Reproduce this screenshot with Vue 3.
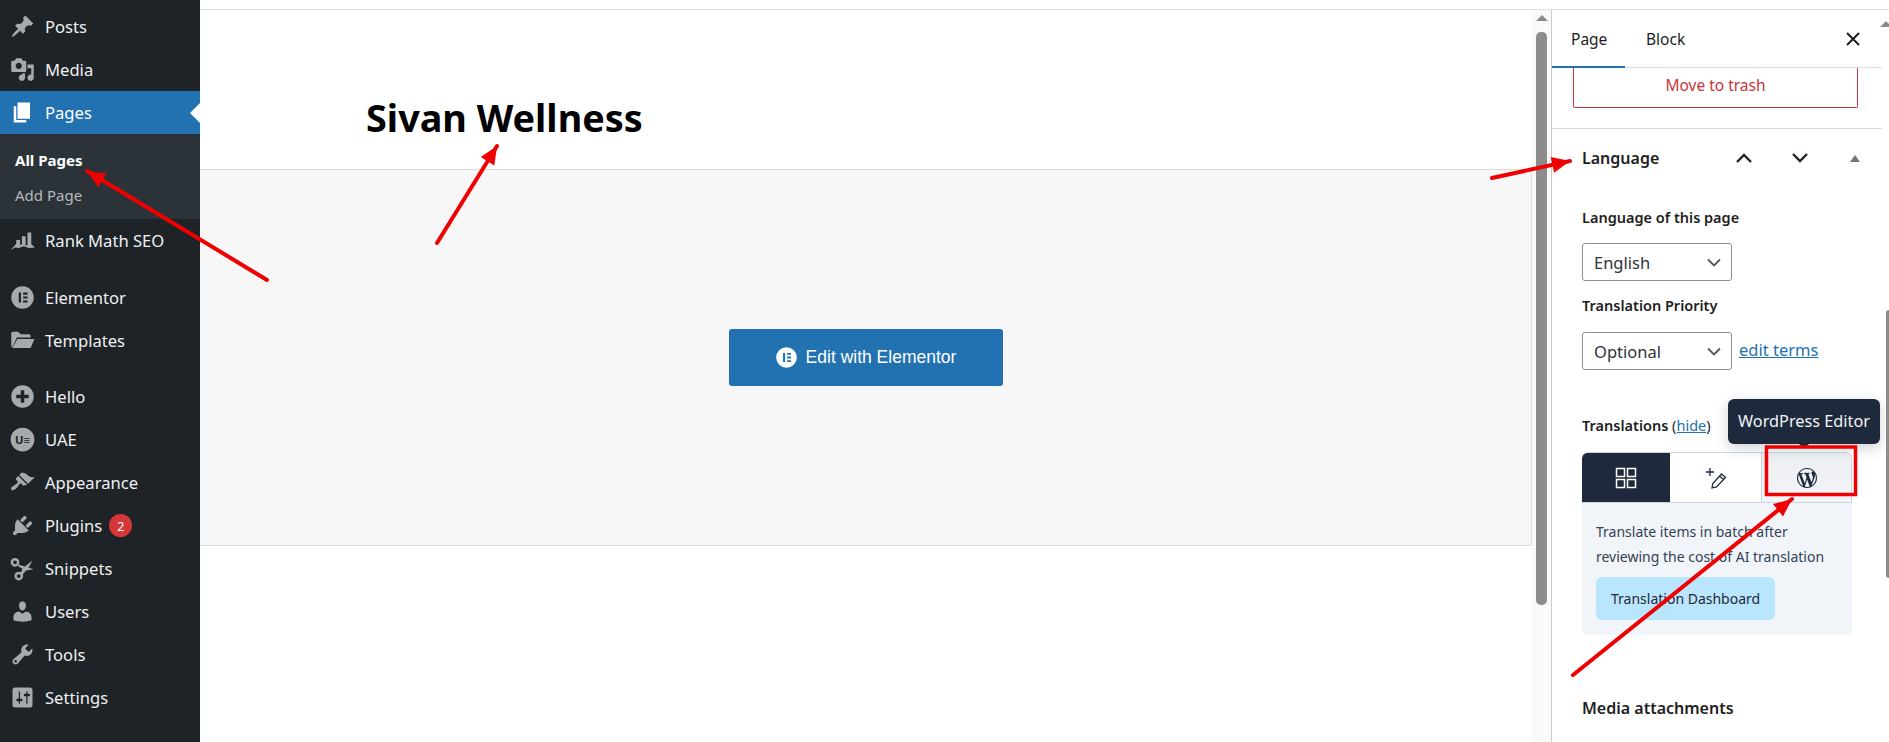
<script setup>
const ICONS = {
  posts: 'M10.44 3.02l1.82-1.82 6.36 6.35-1.83 1.82c-1.05-.68-2.48-.57-3.41.36l-.75.75c-.92.93-1.04 2.35-.35 3.41l-1.83 1.82-2.41-2.41-2.8 2.79c-.42.42-3.38 2.71-3.8 2.29s1.86-3.39 2.28-3.81l2.79-2.79L4.1 9.36l1.83-1.82c1.05.69 2.48.57 3.4-.36l.75-.75c.93-.92 1.05-2.35.36-3.41z',
  media: 'M13 11V4c0-.55-.45-1-1-1h-1.67L9 1H5L3.67 3H2c-.55 0-1 .45-1 1v7c0 .55.45 1 1 1h10c.55 0 1-.45 1-1zM7 4.5c1.38 0 2.5 1.12 2.5 2.5S8.38 9.5 7 9.5 4.5 8.38 4.5 7 5.62 4.5 7 4.5zM14 6h5v10.5c0 1.38-1.12 2.5-2.5 2.5S14 17.88 14 16.5s1.12-2.5 2.5-2.5c.17 0 .34.02.5.05V9h-3V6zm-4 8.05V13h2v3.5c0 1.38-1.12 2.5-2.5 2.5S7 17.88 7 16.5 8.12 14 9.5 14c.17 0 .34.02.5.05z',
  pages: 'M6 15V2h10v13H6zm-1 1h8v2H3V5h2v11z',
  rank: 'M.5 17.500L5 12.500V9.500h3v3.500l1.500.5V6.500h3v7.500l1.500-.5V3.500h3V13l3 2.500-5 .5-4-1.500-4 1.500-3-.5z',
  elementor: 'M10 1a9 9 0 1 0 0 18 9 9 0 0 0 0-18zM7 6h1.800v8H7zm3.500 0H14v1.700h-3.500zm0 3.150H14v1.700h-3.500zm0 3.150H14V14h-3.500z',
  templates: 'M1 4.500C1 3.700 1.500 3 2.300 3h4.200l2 2h6.700c.7 0 1.300.6 1.300 1.300V7.500H5.500L2.300 14.500 1 15zM5.900 8.800H19.500l-3 7.200H1.800z',
  hello: 'M10 1a9 9 0 1 0 0 18 9 9 0 0 0 0-18zM8.600 5h2.800v3.600H15v2.800h-3.600V15H8.600v-3.600H5V8.600h3.600z',
  appearance: 'M14.480 11.060L7.410 3.990l1.500-1.500c.5-.56 2.300-.47 3.510.32 1.210.8 1.430 1.280 2.910 2.100 1.180.64 2.450 1.260 4.450.85zm-.71.71L6.700 4.700 4.930 6.470c-.39.39-.39 1.020 0 1.410l1.060 1.060c.39.39.39 1.030 0 1.420-.6.6-1.430 1.110-2.210 1.690-.35.26-.7.53-1.010.84C1.430 13.230.4 14.950 1.260 15.900c.95.85 2.670-.17 4.020-1.510.3-.31.57-.66.84-1.020.58-.78 1.090-1.610 1.690-2.210.39-.39 1.020-.39 1.410 0l1.060 1.060c.39.39 1.020.39 1.410 0z',
  plugins: 'M13.110 4.360L9.870 7.600 8 5.730l3.240-3.240c.35-.34 1.050-.2 1.560.32.52.51.66 1.210.31 1.550zm-8 1.770l.91-1.120 9.010 9.010-1.190.84c-.71.71-2.630 1.160-3.820 1.160H6.140L4.900 17.260c-.59.59-1.540.59-2.120 0-.59-.58-.59-1.530 0-2.120l1.240-1.240v-3.880c0-1.130.4-3.190 1.090-3.890zm7.260 3.970l3.240-3.240c.34-.35 1.040-.21 1.550.31.52.51.66 1.210.31 1.550l-3.240 3.250z',
  users: 'M10 9.250c-2.270 0-2.730-3.440-2.730-3.440C7 4.020 7.820 2 9.970 2c2.160 0 2.980 2.020 2.710 3.810 0 0-.41 3.440-2.680 3.440zm0 2.570L12.720 10c2.390 0 4.520 2.330 4.520 4.530v2.490s-3.650 1.130-7.240 1.130c-3.650 0-7.240-1.130-7.240-1.130v-2.490c0-2.250 1.940-4.480 4.470-4.480z',
  tools: 'M16.680 9.770c-1.340 1.340-3.300 1.670-4.950.99l-5.410 6.520c-.99.99-2.590.99-3.580 0s-.99-2.590 0-3.570l6.520-5.420c-.68-1.650-.35-3.610.99-4.950 1.280-1.280 3.120-1.620 4.720-1.060l-2.890 2.890 2.820 2.820 2.860-2.870c.53 1.580.18 3.390-1.080 4.650zM3.810 16.210c.4.39 1.040.39 1.430 0 .4-.4.4-1.040 0-1.430-.39-.4-1.030-.4-1.430 0-.39.39-.39 1.030 0 1.430z',
  settings: 'M18 16V4c0-1.100-.9-2-2-2H4c-1.100 0-2 .9-2 2v12c0 1.100.9 2 2 2h12c1.100 0 2-.9 2-2zM8 11h1c.55 0 1 .45 1 1s-.45 1-1 1H8v1.500c0 .28-.22.5-.5.5s-.5-.22-.5-.5V13H6c-.55 0-1-.45-1-1s.45-1 1-1h1V5.500c0-.28.22-.5.5-.5s.5.22.5.5V11zm5-2h-1c-.55 0-1-.45-1-1s.45-1 1-1h1V5.500c0-.28.22-.5.5-.5s.5.22.5.5V7h1c.55 0 1 .45 1 1s-.45 1-1 1h-1v5.500c0 .28-.22.5-.5.5s-.5-.22-.5-.5V9z',
  circle: 'M10 1a9 9 0 1 0 0 18 9 9 0 0 0 0-18z'
}

const WP_LOGO = 'M20 10c0-5.510-4.490-10-10-10C4.480 0 0 4.490 0 10c0 5.520 4.480 10 10 10 5.510 0 10-4.480 10-10zM7.780 15.370L4.370 6.220c.55-.02 1.170-.08 1.170-.08.5-.06.44-1.130-.06-1.110 0 0-1.450.11-2.370.11-.18 0-.37 0-.58-.01C4.120 2.690 6.870 1.110 10 1.110c2.330 0 4.450.87 6.050 2.340-.68-.11-1.650.39-1.650 1.580 0 .74.45 1.360.9 2.100.35.61.55 1.360.55 2.460 0 1.490-1.400 5-1.400 5l-3.030-8.370c.54-.02.82-.17.82-.17.5-.05.44-1.250-.06-1.220 0 0-1.440.12-2.380.12-.87 0-2.330-.12-2.330-.12-.5-.03-.56 1.200-.06 1.220l.92.08 1.260 3.410zM17.410 10c.24-.64.74-1.870.43-4.250.7 1.290 1.050 2.710 1.050 4.250 0 3.290-1.730 6.240-4.400 7.780.97-2.590 1.940-5.200 2.920-7.780zM6.100 18.090C3.120 16.630 1.110 13.530 1.110 10c0-1.300.23-2.480.72-3.590C3.250 10.300 4.670 14.200 6.100 18.090zm4.030-6.630l2.580 6.980c-.83.29-1.730.45-2.640.45-.77 0-1.510-.11-2.210-.32.77-2.370 1.530-4.730 2.270-7.110z'

const groups = [
  [
    { label: 'Posts', icon: 'posts' },
    { label: 'Media', icon: 'media' },
    { label: 'Pages', icon: 'pages', active: true, sub: ['All Pages', 'Add Page'] },
    { label: 'Rank Math SEO', icon: 'rank' }
  ],
  [
    { label: 'Elementor', icon: 'elementor' },
    { label: 'Templates', icon: 'templates' }
  ],
  [
    { label: 'Hello', icon: 'hello' },
    { label: 'UAE', icon: 'uae' },
    { label: 'Appearance', icon: 'appearance' },
    { label: 'Plugins', icon: 'plugins', badge: 2 },
    { label: 'Snippets', icon: 'snippets' },
    { label: 'Users', icon: 'users' },
    { label: 'Tools', icon: 'tools' },
    { label: 'Settings', icon: 'settings' }
  ],
  [{ label: '', icon: 'circle' }]
]

const arrows = [
  { from: [267, 280], to: [87, 171] },
  { from: [437, 243], to: [497, 146] },
  { from: [1492, 178], to: [1570, 161] },
  { from: [1573, 675], to: [1792, 499] }
]

function head(a) {
  const [x1, y1] = a.from
  const [x2, y2] = a.to
  const len = Math.hypot(x2 - x1, y2 - y1)
  const ux = (x2 - x1) / len
  const uy = (y2 - y1) / len
  const bx = x2 - ux * 18
  const by = y2 - uy * 18
  return `${x2},${y2} ${bx - uy * 8},${by + ux * 8} ${bx + uy * 8},${by - ux * 8}`
}
</script>

<template>
  <div class="page">
    <aside class="adminmenu">
      <div v-for="(group, g) in groups" :key="g" class="menu-group">
        <template v-for="item in group" :key="item.icon">
          <div class="menu-item" :class="{ active: item.active }">
            <span class="menu-icon">
              <svg v-if="item.icon === 'snippets'" viewBox="0 0 20 20" width="25" height="25">
                <circle cx="4" cy="5" r="2.500" fill="none" stroke="currentColor" stroke-width="2" />
                <circle cx="7" cy="16" r="2.500" fill="none" stroke="currentColor" stroke-width="2" />
                <path d="M6 6.500l13 4-6 1-6-3zM8.500 14L10 10l8-6.500-3 5.500-5 6z" fill="currentColor" />
              </svg>
              <svg v-else-if="item.icon === 'uae'" viewBox="0 0 20 20" width="25" height="25">
                <circle cx="10" cy="10" r="9.500" fill="currentColor" />
                <text x="10" y="13.500" text-anchor="middle" class="uae-mark">U≡</text>
              </svg>
              <svg v-else viewBox="0 0 20 20" width="25" height="25">
                <path :d="ICONS[item.icon]" fill="currentColor" fill-rule="evenodd" />
              </svg>
            </span>
            <span class="menu-label">{{ item.label }}</span>
            <span v-if="item.badge" class="menu-badge">{{ item.badge }}</span>
          </div>
          <div v-if="item.sub" class="submenu">
            <div v-for="(s, i) in item.sub" :key="s" class="submenu-item" :class="{ current: i === 0 }">{{ s }}</div>
          </div>
        </template>
      </div>
    </aside>

    <div class="workspace">
      <main class="editor">
        <div class="canvas">
          <div class="title-block">
            <h1>Sivan Wellness</h1>
          </div>
          <div class="builder-block">
            <button class="elementor-btn">
              <svg viewBox="0 0 20 20" width="23" height="23">
                <path :d="ICONS.elementor" fill="#fff" fill-rule="evenodd" />
              </svg>
              Edit with Elementor
            </button>
          </div>
        </div>
        <div class="scrollbar">
          <span class="scroll-up"></span>
          <span class="scroll-thumb"></span>
        </div>
      </main>

      <section class="sidepanel">
        <div class="tabs">
          <div class="tab selected">Page</div>
          <div class="tab">Block</div>
          <svg class="close" viewBox="0 0 24 24" width="24" height="24">
            <path d="M6 6l12 12M18 6L6 18" stroke="#1e1e1e" stroke-width="2" fill="none" />
          </svg>
        </div>

        <div class="trash-wrap">
          <div class="trash">Move to trash</div>
        </div>

        <div class="lang-panel">
          <div class="lang-head">
            <h2>Language</h2>
            <div class="lang-controls">
              <svg viewBox="0 0 20 12" width="20" height="12"><path d="M3 10l7-7 7 7" fill="none" stroke="#1d2327" stroke-width="2.400" /></svg>
              <svg viewBox="0 0 20 12" width="20" height="12"><path d="M3 2l7 7 7-7" fill="none" stroke="#1d2327" stroke-width="2.400" /></svg>
              <span class="collapse"></span>
            </div>
          </div>

          <div class="field-label first">Language of this page</div>
          <div class="select">
            <span>English</span>
            <svg viewBox="0 0 14 9" width="14" height="9"><path d="M1 1.500l6 6 6-6" fill="none" stroke="#50575e" stroke-width="1.800" /></svg>
          </div>

          <div class="field-label second">Translation Priority</div>
          <div class="select-row">
            <div class="select">
              <span>Optional</span>
              <svg viewBox="0 0 14 9" width="14" height="9"><path d="M1 1.500l6 6 6-6" fill="none" stroke="#50575e" stroke-width="1.800" /></svg>
            </div>
            <a class="link terms">edit terms</a>
          </div>

          <div class="translations-label">
            <b>Translations</b> (<a class="link">hide</a>)
          </div>

          <div class="tl-box">
            <div class="tl-tabs">
              <div class="tl-tab on">
                <svg viewBox="0 0 22 22" width="22" height="22" fill="none" stroke="#fff" stroke-width="1.500">
                  <rect x="1.500" y="1.500" width="8" height="8" />
                  <rect x="12.500" y="1.500" width="8" height="8" />
                  <rect x="1.500" y="12.500" width="8" height="8" />
                  <rect x="12.500" y="12.500" width="8" height="8" />
                </svg>
              </div>
              <div class="tl-tab">
                <svg viewBox="0 0 22 22" width="22" height="22" fill="none" stroke="#1e293b" stroke-width="1.300">
                  <path d="M5 1v8M1 5h8" />
                  <path d="M16.500 7l4 3.500-9 9.500-4.500 1 .8-4.500zM14.500 9l4 3.500" />
                </svg>
              </div>
              <div class="tl-tab wp">
                <svg viewBox="0 0 20 20" width="20" height="20">
                  <path :d="WP_LOGO" fill="#1e293b" fill-rule="evenodd" />
                </svg>
              </div>
            </div>
            <div class="tl-body">
              <p>Translate items in batch after reviewing the cost of AI translation</p>
              <div class="tl-btn">Translation Dashboard</div>
            </div>
          </div>

          <div class="media-label">Media attachments</div>
        </div>

        <div class="tooltip">WordPress Editor</div>
        <span class="panel-scroll-up"></span>
        <span class="panel-scroll-thumb"></span>
      </section>
    </div>

    <!-- markup drawn on top of the screenshot -->
    <svg class="annotations" width="1889" height="742" viewBox="0 0 1889 742">
      <rect x="1766.500" y="447" width="89" height="47.500" fill="none" stroke="#f00000" stroke-width="3.500" />
      <g v-for="(a, i) in arrows" :key="i">
        <line :x1="a.from[0]" :y1="a.from[1]" :x2="a.to[0]" :y2="a.to[1]" stroke="#f00000" stroke-width="4" stroke-linecap="round" />
        <polygon :points="head(a)" fill="#f00000" />
      </g>
    </svg>
  </div>
</template>

<style>
html, body {
  margin: 0;
  overflow: hidden;
  background: #fff;
}
</style>

<style scoped>
.page {
  position: relative;
  display: flex;
  width: 1889px;
  height: 742px;
  overflow: hidden;
  font-family: "Noto Sans", sans-serif;
  color: #1e1e1e;
}

/* admin menu */
.adminmenu {
  width: 200px;
  flex: none;
  height: 742px;
  background: #1d2327;
  padding-top: 5px;
  box-sizing: border-box;
  color: #f0f0f1;
  font-size: 16.600px;
}
.menu-group {
  margin-bottom: 13px;
}
.menu-group:first-child {
  margin-bottom: 14px;
}
.menu-item {
  position: relative;
  display: flex;
  align-items: center;
  height: 43px;
  padding-left: 10px;
}
.menu-icon {
  display: flex;
  width: 35px;
  color: #a7aaad;
}
.menu-item.active {
  background: #2271b1;
  color: #fff;
}
.menu-item.active .menu-icon {
  color: #fff;
}
.menu-item.active::after {
  content: "";
  position: absolute;
  right: 0;
  top: 12px;
  border: 10px solid transparent;
  border-right-color: #fff;
  border-left-width: 0;
}
.uae-mark {
  font-size: 9px;
  font-weight: 700;
  fill: #1d2327;
}
.menu-badge {
  display: flex;
  align-items: center;
  justify-content: center;
  width: 23px;
  height: 23px;
  margin-left: 7px;
  border-radius: 50%;
  background: #d63638;
  color: #fff;
  font-size: 13px;
}
.submenu {
  background: #2c3338;
  padding: 9px 0 6px;
}
.submenu-item {
  height: 35px;
  line-height: 35px;
  padding-left: 15px;
  font-size: 15px;
  color: #b4b9be;
}
.submenu-item.current {
  color: #fff;
  font-weight: 700;
}

/* main area */
.workspace {
  flex: 1;
  display: flex;
  margin-top: 9px;
  border-top: 1px solid #e0e0e0;
  min-width: 0;
}
.editor {
  flex: 1;
  display: flex;
  min-width: 0;
}
.canvas {
  flex: 1;
}
.title-block {
  height: 159px;
  box-sizing: border-box;
  padding: 83px 0 0 166px;
}
h1 {
  margin: 0;
  font-size: 37.800px;
  line-height: 50px;
  font-weight: 700;
  color: #000;
}
.builder-block {
  height: 377px;
  box-sizing: border-box;
  display: flex;
  justify-content: center;
  align-items: flex-start;
  padding: 159px 0 0 0;
  background: #f7f7f7;
  border-top: 1px solid #ddd;
  border-bottom: 1px solid #ddd;
  border-right: 1px solid #ddd;
}
.elementor-btn {
  display: flex;
  align-items: center;
  justify-content: center;
  gap: 8px;
  width: 274px;
  height: 57px;
  border: 0;
  border-radius: 3px;
  background: #2271b1;
  color: #fff;
  font-family: "Liberation Sans", Arial, sans-serif;
  font-size: 17.500px;
}
.scrollbar {
  width: 19px;
  flex: none;
  display: flex;
  flex-direction: column;
  align-items: center;
  background: #fafafa;
}
.scroll-up {
  margin-top: 5px;
  border: 6px solid transparent;
  border-bottom-color: #8c8c8c;
  border-top-width: 0;
}
.scroll-thumb {
  margin-top: 11px;
  width: 11px;
  height: 573px;
  border-radius: 5px;
  background: #8c8c8c;
}

/* side panel */
.sidepanel {
  position: relative;
  width: 338px;
  flex: none;
  box-sizing: border-box;
  border-left: 1px solid #ccc;
  font-size: 15px;
}
.tabs {
  display: flex;
  align-items: center;
  height: 58px;
  box-sizing: border-box;
  border-bottom: 1px solid #ddd;
  margin-right: 7px;
}
.tab {
  height: 58px;
  line-height: 58px;
  box-sizing: border-box;
  padding: 0 19px 0 19px;
  font-size: 15.500px;
  color: #1e1e1e;
}
.tab + .tab {
  padding-left: 21px;
}
.tab.selected {
  width: 73px;
  border-bottom: 2px solid #2271b1;
}
.close {
  margin: 0 17px 0 auto;
}
.trash-wrap {
  padding: 0 24px 20px 21px;
  border-bottom: 1px solid #ddd;
  margin-right: 7px;
}
.trash {
  height: 40px;
  box-sizing: border-box;
  border: 1px solid #c9353a;
  border-top: 0;
  border-radius: 0 0 2px 2px;
  text-align: center;
  line-height: 34px;
  color: #c9353a;
  font-size: 15.500px;
}
.lang-panel {
  padding: 0 36px 0 30px;
}
.lang-head {
  display: flex;
  align-items: center;
  justify-content: space-between;
  height: 58px;
}
h2 {
  margin: 0;
  font-size: 16px;
  font-weight: 600;
  color: #1e1e1e;
}
.lang-controls {
  display: flex;
  align-items: center;
  gap: 36px;
  padding-right: 2px;
}
.collapse {
  margin-left: 4px;
  margin-right: -9px;
  border: 5px solid transparent;
  border-bottom: 7px solid #757575;
  border-top-width: 0;
}
.field-label {
  font-weight: 600;
  font-size: 14.500px;
  line-height: 20px;
}
.field-label.first {
  margin-top: 20px;
  margin-bottom: 16px;
}
.field-label.second {
  margin-top: 14px;
  margin-bottom: 17px;
}
.select {
  display: flex;
  align-items: center;
  justify-content: space-between;
  width: 150px;
  height: 38px;
  box-sizing: border-box;
  padding: 0 10px 0 11px;
  border: 1px solid #8c8f94;
  border-radius: 3px;
  font-size: 16.500px;
  color: #2c3338;
}
.select-row {
  display: flex;
  align-items: center;
  gap: 7px;
}
.link {
  color: #2271b1;
  text-decoration: underline;
}
.terms {
  font-size: 16.500px;
  margin-top: -4px;
}
.translations-label {
  margin-top: 45px;
  font-size: 14.500px;
  line-height: 20px;
}
.translations-label b {
  font-weight: 600;
}
.tl-box {
  width: 270px;
  margin-top: 17px;
  background: #f1f5f9;
  border-radius: 6px;
  overflow: hidden;
}
.tl-tabs {
  display: grid;
  grid-template-columns: 88px 91px 91px;
  height: 51px;
  box-sizing: border-box;
  border: 1px solid #cbd5e1;
  border-left: 0;
  border-radius: 6px 6px 0 0;
  overflow: hidden;
}
.tl-tab {
  display: flex;
  align-items: center;
  justify-content: center;
  background: #fff;
}
.tl-tab.on {
  background: #1e293b;
}
.tl-tab.wp {
  background: linear-gradient(#eceef2, #f4f5f8);
  border-left: 1px solid #cbd5e1;
}
.tl-body {
  padding: 17px 14px 15px;
}
.tl-body p {
  margin: 0;
  font-size: 14px;
  line-height: 24.500px;
  color: #334155;
}
.tl-btn {
  display: inline-block;
  margin-top: 8px;
  height: 43px;
  line-height: 43px;
  padding: 0 15px;
  border-radius: 6px;
  background: #bae6fd;
  font-size: 14px;
  color: #1e293b;
}
.media-label {
  margin-top: 62px;
  font-size: 16px;
  font-weight: 600;
  color: #1e1e1e;
}
.tooltip {
  position: absolute;
  left: 176px;
  top: 389px;
  width: 152px;
  height: 45px;
  line-height: 45px;
  text-align: center;
  border-radius: 6px;
  background: #1e293b;
  color: #f1f5f9;
  font-size: 16.300px;
  box-shadow: 0 4px 14px rgba(15, 23, 42, 0.2);
}
.tooltip::after {
  content: "";
  position: absolute;
  left: 71px;
  bottom: -4px;
  border: 5px solid transparent;
  border-top: 4px solid #1e293b;
  border-bottom-width: 0;
}
.panel-scroll-up {
  position: absolute;
  right: -3px;
  top: 11px;
  border: 6px solid transparent;
  border-bottom-color: #8c8c8c;
  border-top-width: 0;
}
.panel-scroll-thumb {
  position: absolute;
  right: 0;
  top: 300px;
  width: 3px;
  height: 268px;
  border-radius: 3px 0 0 3px;
  background: #8c8c8c;
}

.annotations {
  position: absolute;
  left: 0;
  top: 0;
  pointer-events: none;
}
</style>
